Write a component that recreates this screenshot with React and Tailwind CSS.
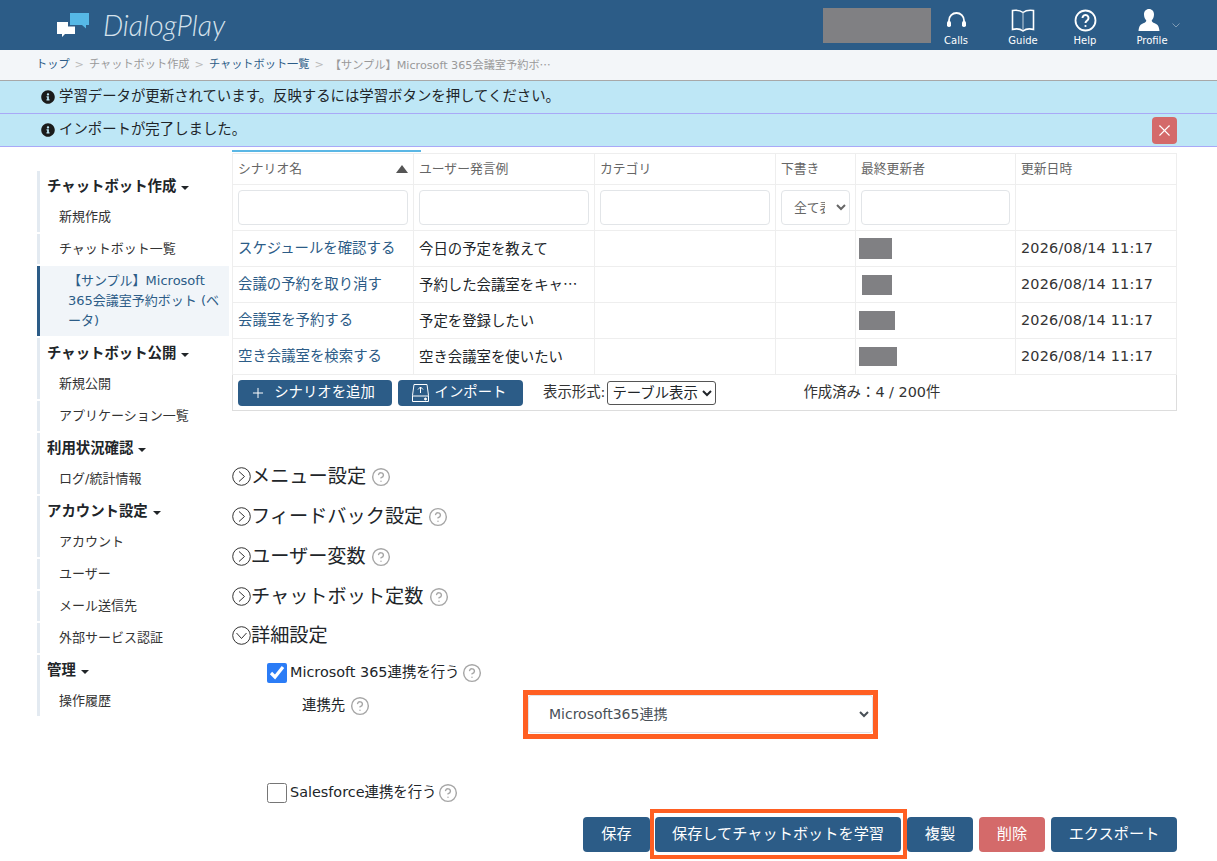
import { X, CircleHelp, Plus } from 'lucide-react';
import { FaInfoCircle } from 'react-icons/fa';

const menu = [
  { type: 'head', label: 'チャットボット作成' },
  { type: 'item', label: '新規作成', joined: true },
  { type: 'item', label: 'チャットボット一覧' },
  { type: 'active', label: '【サンプル】Microsoft 365会議室予約ボット (ベータ)' },
  { type: 'head', label: 'チャットボット公開' },
  { type: 'item', label: '新規公開', joined: true },
  { type: 'item', label: 'アプリケーション一覧' },
  { type: 'head', label: '利用状況確認' },
  { type: 'item', label: 'ログ/統計情報', joined: true },
  { type: 'head', label: 'アカウント設定' },
  { type: 'item', label: 'アカウント', joined: true },
  { type: 'item', label: 'ユーザー' },
  { type: 'item', label: 'メール送信先' },
  { type: 'item', label: '外部サービス認証' },
  { type: 'head', label: '管理' },
  { type: 'item', label: '操作履歴', joined: true },
];

const rows = [
  { name: 'スケジュールを確認する', sample: '今日の予定を教えて', box: 'ml-[3px] w-[33px] h-[21px]' },
  { name: '会議の予約を取り消す', sample: '予約した会議室をキャンセルしたい', box: 'ml-[6px] w-[30px] h-[20px]' },
  { name: '会議室を予約する', sample: '予定を登録したい', box: 'ml-[3px] w-[36px] h-[19px]' },
  { name: '空き会議室を検索する', sample: '空き会議室を使いたい', box: 'ml-[3px] w-[38px] h-[19px]' },
];

const sections = ['メニュー設定', 'フィードバック設定', 'ユーザー変数', 'チャットボット定数'];

function Logo() {
  return (
    <svg width="34" height="26" viewBox="0 0 34 26" className="shrink-0">
      <path d="M14 1h19v12h-3v3.500l-4-3.500H14z" fill="#56b8e6" />
      <path d="M1 10h11v4.500h7V22H9l-3 3v-3H1z" fill="#ffffff" />
    </svg>
  );
}

function NavItem({ label, className, children }) {
  return (
    <div className={`relative w-[50px] flex flex-col items-center pt-2 ${className}`}>
      <div className="h-6 flex items-center justify-center">{children}</div>
      <span className="mt-[3px] text-[10px] leading-3 text-white">{label}</span>
    </div>
  );
}

function Help() {
  return <CircleHelp size={20} strokeWidth={1.7} className="shrink-0 text-[#a6a6a6]" />;
}

function Toggle({ open }) {
  return (
    <svg width="19" height="19" viewBox="0 0 19 19" fill="none" stroke="#333333" strokeWidth="1" className="-mt-[2px] shrink-0">
      <circle cx="9.500" cy="9.500" r="8.800" />
      <path d={open ? 'M4.500 7l5 5.500 5-5.500' : 'M7 4.500l5.500 5-5.500 5'} />
    </svg>
  );
}

function Alert({ text, children }) {
  return (
    <div className="h-[33px] pl-[41px] pr-10 flex items-center bg-[#bee7f6] border-b border-[#a9a9f7] text-[14.4px] text-[#212529]">
      <FaInfoCircle size={14} className="mr-1 text-[#1b1b1b]" />
      <span>{text}</span>
      {children}
    </div>
  );
}

function Sidebar() {
  return (
    <ul className="w-[192px] shrink-0 flex flex-col gap-[2px]">
      {menu.map((m) => {
        if (m.type === 'head') {
          return (
            <li key={m.label} className="-mb-[2px] h-[31px] pl-[7px] flex items-center border-l-[3px] border-[#e3eaf1] text-[14.4px] font-bold text-[#212529]">
              {m.label}
              <span className="ml-[5px] mt-[2px] border-x-[4px] border-t-[4px] border-x-transparent border-t-[#212529]" />
            </li>
          );
        }
        if (m.type === 'active') {
          return (
            <li key={m.label} className="h-[70px] pl-[28px] pr-2 py-[5px] border-l-[3px] border-[#2c5c87] bg-[#f1f5f9] text-[13px] leading-5 text-[#2c5c87]">
              {m.label}
            </li>
          );
        }
        return (
          <li key={m.label} className="h-[30px] pl-[19px] flex items-center border-l-[3px] border-[#e3eaf1] text-[13px] text-[#333333]">
            {m.label}
          </li>
        );
      })}
    </ul>
  );
}

function ScenarioTable() {
  const th = 'h-[31px] pl-[5px] border border-[#eeeeee] text-left text-[12.8px] font-normal text-[#666666]';
  const filter = 'h-[46px] px-[5px] border border-[#eeeeee]';
  const input = 'block w-full h-[35px] rounded border border-[#e2e5e8] bg-white';
  const td = 'h-[36px] pl-[5px] pr-[4px] pb-[2px] border border-[#eeeeee] text-[14.4px] leading-5 truncate';

  return (
    <table className="w-[944px] table-fixed border-collapse border border-[#dddddd]">
      <colgroup>
        <col className="w-[181px]" />
        <col className="w-[181px]" />
        <col className="w-[181px]" />
        <col className="w-[80px]" />
        <col className="w-[160px]" />
        <col className="w-[161px]" />
      </colgroup>
      <thead>
        <tr>
          <th className={th}>
            <div className="flex items-center justify-between pr-[5px]">
              シナリオ名
              <span className="border-x-[6px] border-b-[8px] border-x-transparent border-b-[#555555]" />
            </div>
          </th>
          <th className={th}>ユーザー発言例</th>
          <th className={th}>カテゴリ</th>
          <th className={th}>下書き</th>
          <th className={th}>最終更新者</th>
          <th className={th}>更新日時</th>
        </tr>
        <tr>
          <td className={filter}><input className={input} /></td>
          <td className={filter}><input className={input} /></td>
          <td className={filter}><input className={input} /></td>
          <td className={filter}>
            <select className="block w-full h-[35px] pl-2 pr-2 rounded border border-[#e2e5e8] bg-white text-[12.8px] text-[#666666]">
              <option>全て表示</option>
            </select>
          </td>
          <td className={filter}><input className={input} /></td>
          <td className={filter} />
        </tr>
      </thead>
      <tbody>
        {rows.map((r) => (
          <tr key={r.name}>
            <td className={`${td} text-[#2c5c87]`}>{r.name}</td>
            <td className={`${td} text-[#212529] font-['Noto_Sans_CJK_JP',sans-serif]`}>{r.sample}</td>
            <td className={td} />
            <td className={td} />
            <td className="h-[36px] border border-[#eeeeee]">
              <div className={`bg-[#808083] ${r.box}`} />
            </td>
            <td className={`${td} text-[#333333] tracking-[0.2px]`}>2026/08/14 11:17</td>
          </tr>
        ))}
        <tr>
          <td colSpan={6} className="h-[36px] px-[5px]">
            <div className="flex items-center text-[14.4px] text-[#333333]">
              <button className="w-[154px] h-[26px] pr-[5px] flex items-center justify-center gap-2 rounded bg-[#2c5c87] text-white">
                <Plus size={16} strokeWidth={1.5} />
                シナリオを追加
              </button>
              <button className="ml-[6px] w-[125px] h-[26px] pr-[4px] flex items-center justify-center gap-[5px] rounded bg-[#2c5c87] text-white">
                <svg width="19" height="20" viewBox="0 0 19 20" fill="none" stroke="#ffffff" strokeWidth="1">
                  <path d="M3 1.500h13l1.500 11v6h-16v-6z" />
                  <path d="M1.500 13h16" />
                  <path d="M9.500 10V4M7 6.500l2.500-2.500 2.500 2.500" />
                  <circle cx="14.500" cy="16" r="1" fill="#ffffff" />
                </svg>
                インポート
              </button>
              <span className="ml-5">表示形式:</span>
              <select className="ml-[2px] w-[109px] h-[24px] rounded-[3px] border border-[#555555] bg-white text-[14.4px] text-[#212529]">
                <option>テーブル表示</option>
              </select>
              <span className="ml-[87px]">作成済み：4 / 200件</span>
            </div>
          </td>
        </tr>
      </tbody>
    </table>
  );
}

function Integration() {
  return (
    <div className="ml-[35px]">
      <label className="mt-[5px] h-6 flex items-center text-[14.4px] text-[#212529]">
        <input type="checkbox" defaultChecked className="w-5 h-5 accent-[#2b7cf6]" />
        <span className="ml-[3px]">Microsoft 365連携を行う</span>
        <span className="ml-[3px]"><Help /></span>
      </label>
      <div className="mt-[5px] flex items-start">
        <div className="ml-[35px] w-[226px] h-[32px] flex items-center gap-[5px] text-[14.4px] text-[#212529]">
          連携先
          <Help />
        </div>
        <div className="relative mt-[5px] w-[345px] h-[38px]">
          <select className="block w-full h-full pl-4 rounded-[3px] border border-[#dfe4e9] bg-white text-[14px] text-[#495057]">
            <option>Microsoft365連携</option>
          </select>
          <span className="absolute -inset-x-[5px] -top-[5px] -bottom-[6px] border-[5px] border-[#ff5f22] pointer-events-none" />
        </div>
      </div>
      <label className="mt-[48px] h-6 flex items-center text-[14.4px] text-[#212529]">
        <input type="checkbox" className="w-5 h-5" />
        <span className="ml-[3px]">Salesforce連携を行う</span>
        <span className="ml-[1px]"><Help /></span>
      </label>
    </div>
  );
}

export default function App() {
  const btn = 'h-[35px] rounded text-[15.200px] text-white';

  return (
    <div lang="ja" className="h-[861px] overflow-hidden bg-white font-['DejaVu_Sans','Noto_Sans_CJK_JP',sans-serif]">
      <header className="h-[50px] pl-[56px] pr-10 flex items-center bg-[#2c5c87]">
        <Logo />
        <span className="ml-[13px] mt-px font-['Lato',sans-serif] italic font-light text-[28.500px] text-[#d5e2ec]">DialogPlay</span>
        <div className="ml-auto h-full flex items-start">
          <div className="mt-2 w-[108px] h-[35px] bg-[#808083]" />
          <NavItem label="Calls">
            <svg width="21" height="16" viewBox="0 0 21 16" fill="none">
              <path d="M3 10V8.500a7.500 7.500 0 0 1 15 0V10" stroke="#ffffff" strokeWidth="1.800" />
              <rect x="1" y="9" width="4" height="6" rx="1.800" fill="#ffffff" />
              <rect x="16" y="9" width="4" height="6" rx="1.800" fill="#ffffff" />
            </svg>
          </NavItem>
          <NavItem label="Guide" className="ml-[17px]">
            <svg width="24" height="23" viewBox="0 0 24 23" fill="none" stroke="#ffffff" strokeWidth="1.600">
              <path d="M12 3.500C9.500 1.500 5 1 1.500 1.500v19c3.500-1 8-.5 10.500 1.500 2.500-2 7-2.500 10.500-1.500v-19C19 1 14.500 1.500 12 3.500z" />
              <path d="M12 3.500V21" strokeWidth="1" stroke="#c5d3df" />
            </svg>
          </NavItem>
          <NavItem label="Help" className="ml-3">
            <svg width="23" height="23" viewBox="0 0 23 23" fill="none" stroke="#ffffff" strokeWidth="1.800">
              <circle cx="11.500" cy="11.500" r="10" />
              <path d="M8.500 9a3 3 0 1 1 4.500 2.600c-1 .6-1.500 1.100-1.500 2.400" strokeWidth="2" />
              <circle cx="11.500" cy="17" r="1.100" fill="#ffffff" stroke="none" />
            </svg>
          </NavItem>
          <NavItem label="Profile" className="ml-[17px]">
            <svg width="22" height="22" viewBox="0 0 22 22" fill="#ffffff" className="-ml-[6px]">
              <path d="M11 0c3 0 5 2.300 5 5.500 0 2.500-1 4.500-2.300 6 0 1.300 1 2 3 2.800 2.700 1 4.300 2.500 4.800 7.700H.5c.5-5.200 2.100-6.700 4.800-7.700 2-.8 3-1.500 3-2.800C7 10 6 8 6 5.500 6 2.300 8 0 11 0z" />
            </svg>
            <svg width="8" height="5" viewBox="0 0 8 5" fill="none" stroke="#7f9bb4" className="absolute -right-[3px] top-[23px]">
              <path d="M.5.5 4 4 7.500.5" />
            </svg>
          </NavItem>
        </div>
      </header>

      <nav className="h-[31px] pl-[36px] flex items-center bg-[#f3f6f9] border-b border-[#a8a8a8] text-[11.200px] text-[#999999]">
        <span className="text-[#2c5c87]">トップ</span>
        <span className="mx-[5px] text-[#bbbbbb]">&gt;</span>
        <span>チャットボット作成</span>
        <span className="mx-[5px] text-[#bbbbbb]">&gt;</span>
        <span className="text-[#2c5c87]">チャットボット一覧</span>
        <span className="mx-[5px] text-[#bbbbbb]">&gt;</span>
        <span className="ml-[1px]">
          【サンプル】Microsoft 365会議室予約ボ<span className="font-['Noto_Sans_CJK_JP',sans-serif]">…</span>
        </span>
      </nav>

      <Alert text="学習データが更新されています。反映するには学習ボタンを押してください。" />
      <Alert text="インポートが完了しました。">
        <button className="ml-auto w-[25px] h-[27px] flex items-center justify-center rounded bg-[#d46a6a] text-white">
          <X size={19} strokeWidth={1.4} />
        </button>
      </Alert>

      <main className="pl-[37px] pr-[41px] flex">
        <div className="pt-6">
          <Sidebar />
        </div>
        <div className="ml-[3px] flex-1">
          <div className="mt-[3px] w-[189px] h-[2px] bg-[#5bb7e5]" />
          <div className="mt-[1px]">
            <ScenarioTable />
          </div>

          <div className="mt-[46px]">
            {sections.map((s) => (
              <div key={s} className="h-10 flex items-center text-[19.200px] text-[#212529]">
                <Toggle />
                <span>{s}</span>
                <span className="ml-[5px]"><Help /></span>
              </div>
            ))}
            <div className="h-[39px] flex items-center text-[19.200px] text-[#212529]">
              <Toggle open />
              <span>詳細設定</span>
            </div>
          </div>

          <Integration />

          <div className="mt-[12px] flex justify-end gap-[5px]">
            <button className={`${btn} w-[67px] bg-[#2c5c87]`}>保存</button>
            <div className="relative">
              <button className={`${btn} block w-[246px] bg-[#2c5c87]`}>保存してチャットボットを学習</button>
              <span className="absolute -left-[5px] -right-[6px] -top-2 -bottom-[7px] border-4 border-[#ff5f22] pointer-events-none" />
            </div>
            <button className={`${btn} ml-px w-[66px] bg-[#2c5c87]`}>複製</button>
            <button className={`${btn} ml-px w-[66px] bg-[#d46a6a]`}>削除</button>
            <button className={`${btn} ml-px w-[126px] bg-[#2c5c87]`}>エクスポート</button>
          </div>
        </div>
      </main>
    </div>
  );
}
